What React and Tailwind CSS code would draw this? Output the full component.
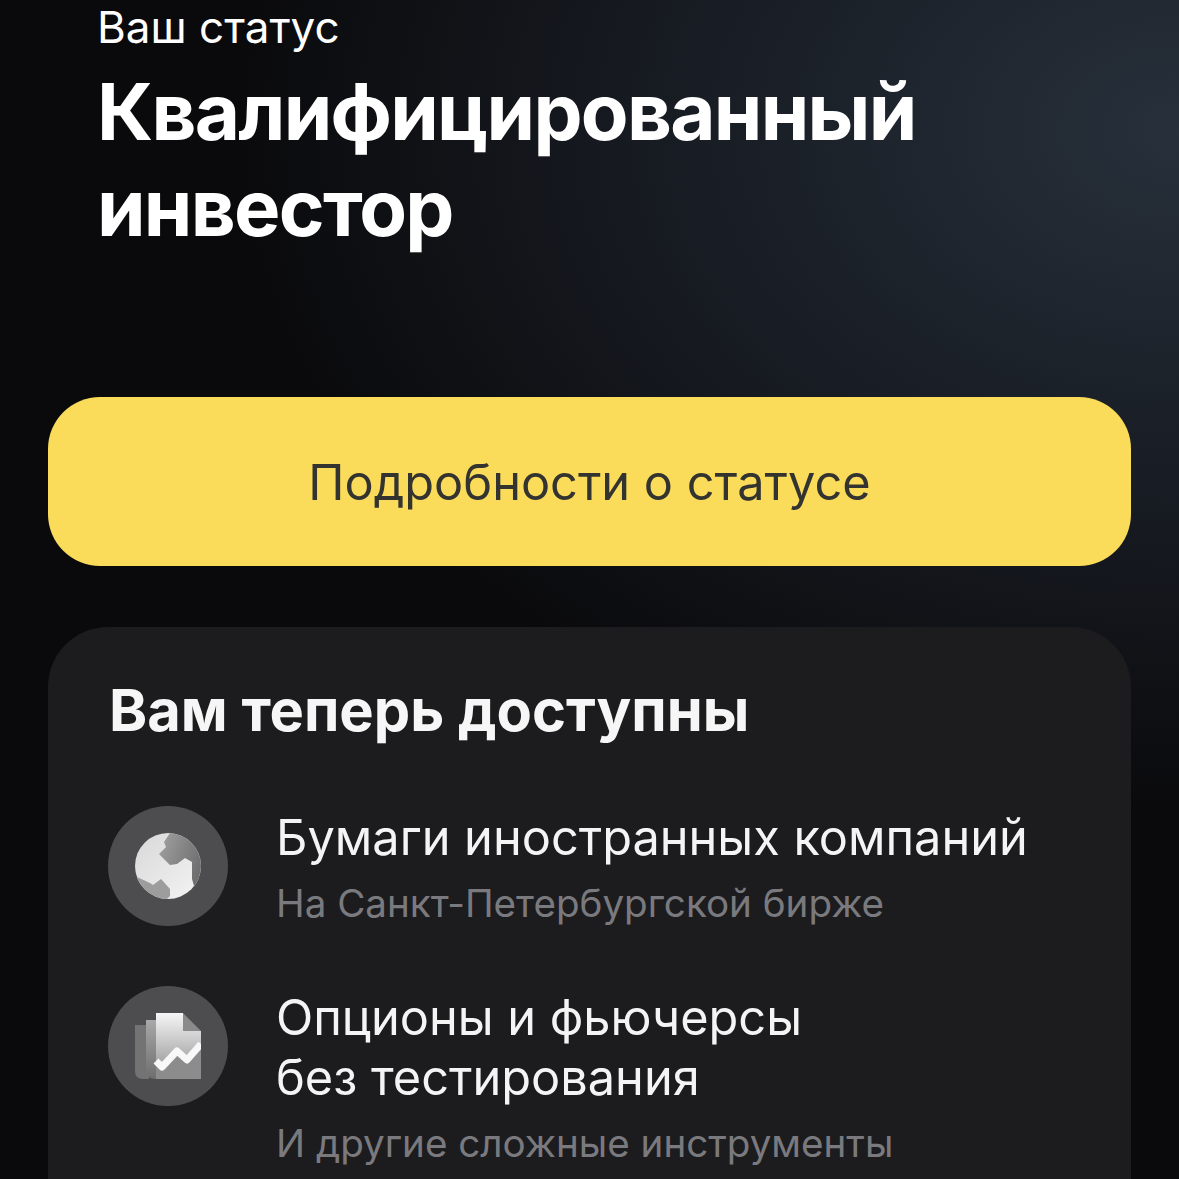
// Investor status screen
const FEATURES_FONT = "font-['Inter','Noto_Sans',sans-serif]"

function GlobeIcon() {
  return (
    <svg width="66" height="66" viewBox="0 0 66 66">
      <defs>
        <linearGradient id="globeBase" x1="0" y1="0" x2="1" y2="1">
          <stop offset="0" stopColor="#d8d8d8" />
          <stop offset="1" stopColor="#f4f4f4" />
        </linearGradient>
        <linearGradient id="globeLand" x1="0" y1="0" x2="1" y2="0.4">
          <stop offset="0" stopColor="#a2a2a2" />
          <stop offset="1" stopColor="#6e6e6e" />
        </linearGradient>
        <clipPath id="globeClip">
          <circle cx="33" cy="33" r="33" />
        </clipPath>
      </defs>
      <circle cx="33" cy="33" r="33" fill="url(#globeBase)" />
      <g clipPath="url(#globeClip)">
        <path d="M35 0L29 9L31 14L24 21L35 32L42 31L50 25L57 29L57 46L59 53L70 40L70 0Z" fill="url(#globeLand)" />
        <path d="M2 44L15 50L18 52L26 46L35 56L35 63L30 68L0 68Z" fill="#9d9d9d" />
      </g>
    </svg>
  )
}

function DocsIcon() {
  return (
    <svg width="66" height="66" viewBox="0 0 66 66">
      <defs>
        <linearGradient id="docFront" x1="0" y1="0" x2="0" y2="1">
          <stop offset="0" stopColor="#f6f6f6" />
          <stop offset="0.75" stopColor="#a6a6a6" />
          <stop offset="1" stopColor="#8c8c8c" />
        </linearGradient>
        <linearGradient id="docMid" x1="0" y1="0" x2="0" y2="1">
          <stop offset="0" stopColor="#a8a8a8" />
          <stop offset="1" stopColor="#6e6e6e" />
        </linearGradient>
      </defs>
      <path d="M0 12H14V66H8Q0 66 0 58Z" fill="#737373" />
      <path d="M11 7H24V66H21Q11 66 11 56Z" fill="url(#docMid)" />
      <path d="M21 0H48V18H66V66H21Z" fill="url(#docFront)" />
      <path d="M48 0L66 18H48Z" fill="#8a8a8a" />
      <path d="M21 52L27 56L42 41L52 49L66 34V66H21Z" fill="#8c8c8c" />
      <path d="M21 48L27 54L42 38L52 47L66 31" fill="none" stroke="#f8f8f8" strokeWidth="7" strokeLinejoin="round" />
    </svg>
  )
}

function Feature({ icon, title, note }) {
  return (
    <div className="flex gap-[48px]">
      <div className="w-[120px] h-[120px] rounded-full bg-[#4d4d4f] flex items-center justify-center shrink-0">
        {icon}
      </div>
      <div className="pt-[2px]">
        <p className="text-[48.7px] leading-[60px] text-[#f4f4f5] whitespace-pre-line">{title}</p>
        <p className="text-[38.6px] leading-[44px] mt-[13px] text-[#7a7a7e]">{note}</p>
      </div>
    </div>
  )
}

export default function App() {
  return (
    <div className={`${FEATURES_FONT} w-[1179px] h-[1179px] overflow-hidden bg-[radial-gradient(ellipse_950px_680px_at_100%_130px,#27303b_0%,#171b22_55%,#0a0a0c_100%)]`}>
      <div className="pl-[97px] pt-[3px]">
        <p className="text-[44px] leading-[48px] text-white">Ваш статус</p>
        <h1 className="text-[78px] leading-[96px] font-bold text-white mt-[13px] tracking-[-1.7px]">
          Квалифицированный
          <br />
          инвестор
        </h1>
      </div>

      <div className="px-[48px] pt-[141px]">
        <button className="w-full h-[169px] rounded-[52px] bg-[#fadc5a] pt-[2px] text-[48.7px] text-[#333330]">
          Подробности о статусе
        </button>

        <div className="mt-[61px] h-[640px] rounded-[60px] bg-[#1c1c1e] pl-[60px] pt-[50px]">
          <h2 className="ml-[1px] text-[57.8px] leading-[66px] font-bold text-[#f6f6f6]">Вам теперь доступны</h2>
          <div className="mt-[63px] flex flex-col gap-[60px]">
            <Feature icon={<GlobeIcon />} title="Бумаги иностранных компаний" note="На Санкт-Петербургской бирже" />
            <Feature icon={<DocsIcon />} title={'Опционы и фьючерсы\nбез тестирования'} note="И другие сложные инструменты" />
          </div>
        </div>
      </div>
    </div>
  )
}
